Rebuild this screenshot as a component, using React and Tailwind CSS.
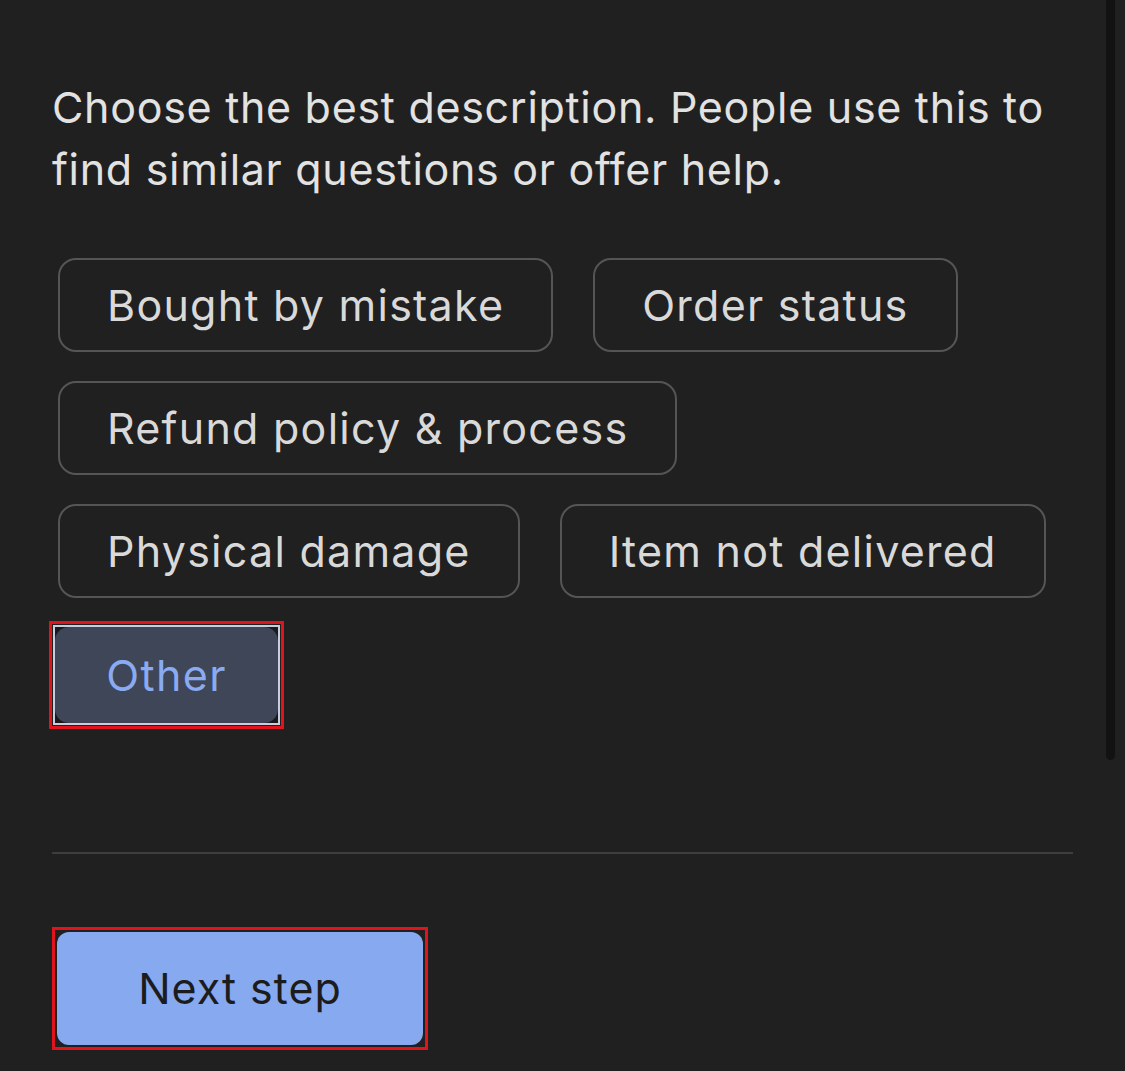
import React from "react";

const topics = [
  ["Bought by mistake", "Order status"],
  ["Refund policy & process"],
  ["Physical damage", "Item not delivered"],
];

function Chip({ label }) {
  return (
    <button className="h-[94px] px-[47px] rounded-[18px] border-2 border-[#555555] text-[#d9d9d9] text-[43px] tracking-[1.25px] leading-none flex items-center">
      {label}
    </button>
  );
}

export default function App() {
  return (
    <div
      className="relative w-[1125px] h-[1071px] bg-[#202020] overflow-hidden"
      style={{ fontFamily: "Inter, 'Noto Sans', sans-serif" }}
    >
      {/* scrollbar */}
      <div className="absolute right-[10px] top-0 w-[9px] h-[760px] rounded-b-full bg-[#121212]" />

      <div className="pl-[52px] pr-[52px] pt-[76px]">
        <p className="text-[43px] leading-[62px] tracking-[0.7px] text-[#e2e2e2]">
          Choose the best description. People use this to
          <br />
          find similar questions or offer help.
        </p>

        <div className="mt-[58px] ml-[6px] flex flex-col gap-[29px]">
          {topics.map((row, i) => (
            <div key={i} className="flex gap-[40px]">
              {row.map((t) => (
                <Chip key={t} label={t} />
              ))}
            </div>
          ))}
        </div>

        <div className="mt-[23px] ml-[-3px] w-[235px] h-[108px] border-[3px] border-[#e0141c] p-px">
          <div className="w-full h-full border-2 border-[#c9cde0] bg-[#1a1a1a]">
            <div className="w-full h-full rounded-[14px] bg-[#3e4658] flex items-center justify-center text-[43px] tracking-[1.4px] text-[#8aabf2]">
              Other
            </div>
          </div>
        </div>

        <div className="mt-[123px] h-[2px] bg-[#3e3e3e]" />

        <div className="mt-[73px] w-[376px] h-[123px] border-[3px] border-[#e0141c] p-[2px]">
          <button className="w-full h-full rounded-[12px] bg-[#87a9f0] text-[#1c1c1c] text-[43px] tracking-[1px] flex items-center justify-center">
            Next step
          </button>
        </div>
      </div>
    </div>
  );
}
